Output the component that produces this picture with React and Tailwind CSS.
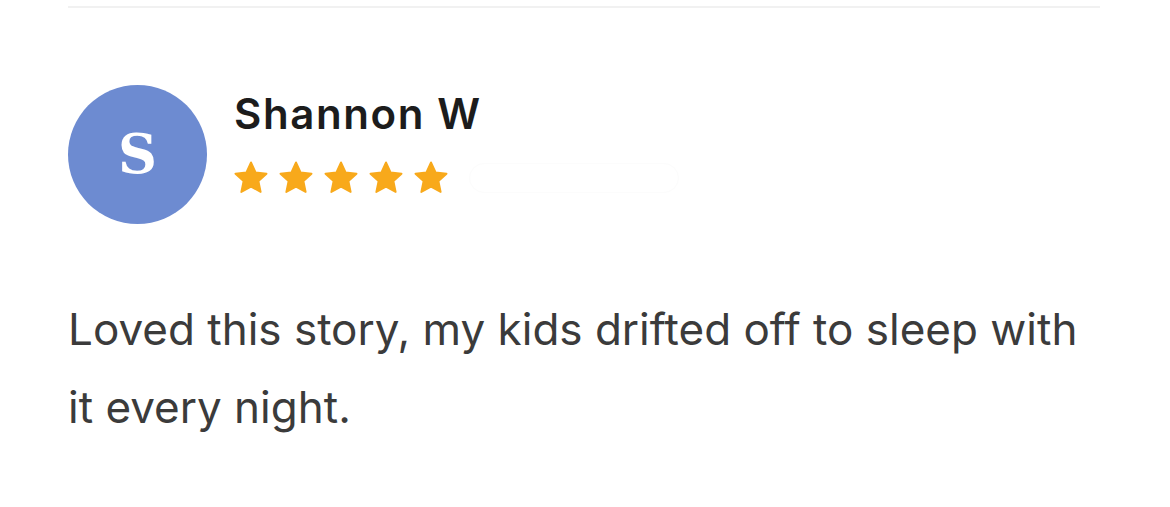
import React from 'react';

const Star = () => (
  <svg viewBox="0 0 24 24" className="w-[38px] h-[38px]" fill="#f8a91b">
    <path d="M12 2.2l2.9 6.3 6.9.8-5.1 4.7 1.4 6.8L12 17.4l-6.1 3.4 1.4-6.8L2.2 9.3l6.9-.8z" strokeLinejoin="round" stroke="#f8a91b" strokeWidth="1.2" />
  </svg>
);

export default function App() {
  return (
    <div className="w-[1170px] h-[507px] bg-white px-[68px] pt-[6px]" style={{ fontFamily: 'Inter, "Noto Sans", sans-serif' }}>
      <div className="h-[2px] bg-[#f1f1f1] mr-[2px]" />
      <div className="flex items-center gap-[27px] mt-[77px]">
        <div className="w-[139px] h-[139px] rounded-full bg-[#6d8bd1] flex items-center justify-center text-white text-[54px] font-bold" style={{ fontFamily: '"DejaVu Serif", serif' }}>
          S
        </div>
        <div className="flex flex-col">
          <div className="text-[42px] tracking-[1.6px] font-semibold text-[#1c1c1c] leading-[50px] -mt-[24px]">Shannon W</div>
          <div className="flex items-center gap-[7px] mt-[20px] -ml-[2px]">
            <Star /><Star /><Star /><Star /><Star />
            <div className="ml-[12px] w-[210px] h-[30px] rounded-full border border-[#fcfcfc]" />
          </div>
        </div>
      </div>
      <p className="mt-[66px] text-[44px] leading-[78px] text-[#3b3b3b] w-[1040px]">
        Loved this story, my kids drifted off to sleep with it every night.
      </p>
    </div>
  );
}
